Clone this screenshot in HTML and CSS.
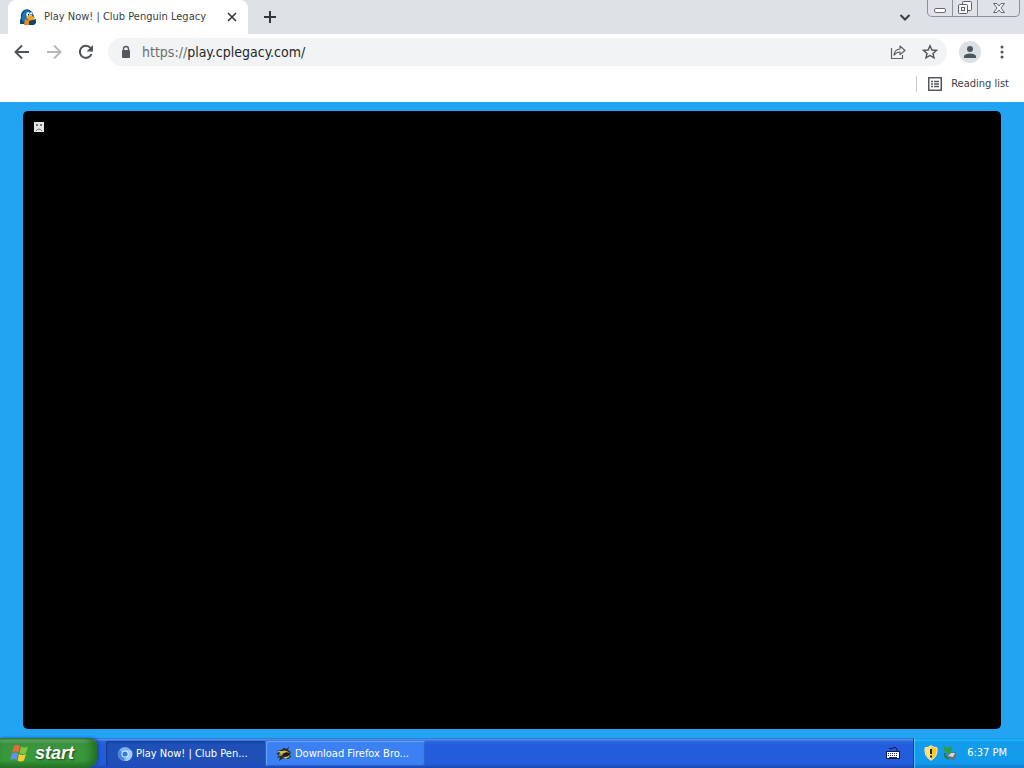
FILE: index.html
```html
<!DOCTYPE html>
<html lang="en">
<head>
<meta charset="utf-8">
<title>Play Now! | Club Penguin Legacy</title>
<link rel="stylesheet" href="styles.css">
</head>
<body>
<div class="desktop">
  <header class="tabstrip">
    <div class="tab">
      <svg class="tab-icon" width="16" height="16" viewBox="0 0 16 16" aria-hidden="true">
        <path d="M0 15V11L1 9Q0 4 4 1Q9-1 12 3L14 7L12 15Z" fill="#0b4c82"/>
        <path d="M2 8Q2 3 6 1.500Q10 1 11 5L9 9L6 12L4 13L2 11Z" fill="#1975b5"/>
        <ellipse cx="8" cy="5.500" rx="1.700" ry="2.500" fill="#fff"/>
        <ellipse cx="11" cy="5.500" rx="1.300" ry="2.300" fill="#fff"/>
        <path d="M8.500 5v1.500M11 5v1.500" stroke="#111"/>
        <path d="M6 8Q10 6 15 8Q14 12 9 12Z" fill="#f5a51c"/>
        <path d="M5 10L10 12L9 16H4Z" fill="#ee8824"/>
        <path d="M9 12L16 10V14L14 16H9Z" fill="#12446a"/>
      </svg>
      <span class="tab-title">Play Now! | Club Penguin Legacy</span>
      <button class="icon-btn tab-close" aria-label="Close tab"><svg width="16" height="16" viewBox="0 0 16 16"><path d="M4 4l8 8M12 4l-8 8" stroke="#33363a" stroke-width="1.600"/></svg></button>
    </div>
    <button class="icon-btn new-tab" aria-label="New tab"><svg width="16" height="16" viewBox="0 0 16 16"><path d="M8 2v12M2 8h12" stroke="#33363a" stroke-width="2"/></svg></button>
    <button class="icon-btn tab-search" aria-label="Search tabs"><svg width="16" height="16" viewBox="0 0 16 16"><path d="M3.500 6L8 10.500L12.500 6" fill="none" stroke="#3c4043" stroke-width="2"/></svg></button>
    <div class="window-controls">
      <button class="win-btn" aria-label="Minimize"><svg width="14" height="14" viewBox="0 0 14 14"><rect x="1.500" y="7.500" width="11" height="4" rx="1.500" fill="#fff" stroke="#666b72"/></svg></button>
      <button class="win-btn" aria-label="Restore"><svg width="14" height="14" viewBox="0 0 14 14"><g fill="#f5f6f8" stroke="#5d6269"><rect x="4.500" y=".5" width="9" height="9" rx="1"/><rect x=".5" y="3.500" width="9" height="9" rx="1"/><rect x="3.500" y="6.500" width="3" height="3"/></g></svg></button>
      <button class="win-btn win-close" aria-label="Close window"><svg width="14" height="14" viewBox="0 0 14 14"><path d="M1.500 2.500h3.500l2 2.500l2-2.500h3.500l-3.500 4.500l3.500 4.500h-3.500l-2-2.500l-2 2.500h-3.500l3.500-4.500z" fill="#f5f6f8" stroke="#666b72"/></svg></button>
    </div>
  </header>

  <nav class="toolbar">
    <button class="icon-btn" aria-label="Back"><svg width="16" height="16" viewBox="0 0 16 16"><path d="M15 8H2M8 1.500L1.500 8L8 14.500" fill="none" stroke="#505357" stroke-width="1.900"/></svg></button>
    <button class="icon-btn" aria-label="Forward"><svg width="16" height="16" viewBox="0 0 16 16"><path d="M1 8H14M8 1.500L14.500 8L8 14.500" fill="none" stroke="#b5b7ba" stroke-width="1.900"/></svg></button>
    <button class="icon-btn" aria-label="Reload"><svg width="16" height="16" viewBox="0 0 16 16"><path d="M13.500 10A6 6 0 1 1 12.500 4" fill="none" stroke="#505357" stroke-width="2"/><path d="M15 1v6.500H8.500z" fill="#505357"/></svg></button>
    <div class="address">
      <svg class="lock" width="12" height="14" viewBox="0 0 12 14" aria-hidden="true"><path d="M3.500 6V4a2.500 2.500 0 0 1 5 0V6" fill="none" stroke="#55595e" stroke-width="1.400"/><rect x="2" y="5" width="8" height="8" rx="1" fill="#55595e"/></svg>
      <label class="scheme" for="url">https://</label>
      <input class="url" id="url" type="text" value="play.cplegacy.com/" spellcheck="false">
      <button class="icon-btn" aria-label="Share"><svg width="16" height="16" viewBox="0 0 16 16" fill="none" stroke="#5f6368" stroke-width="1.200"><path d="M1.500 4v10.500h11V11"/><path d="M4 11Q4.500 5.500 10 5V2L15 6.500L10 10.500V8Q6.500 8 4 11Z" stroke-linejoin="round"/></svg></button>
      <button class="icon-btn" aria-label="Bookmark this page"><svg width="16" height="16" viewBox="0 0 16 16"><path d="M8 1.800L9.900 6l4.500.4L11 9.400l1 4.500L8 11.500L4 13.900l1-4.500L1.600 6.400L6.100 6Z" fill="none" stroke="#505357" stroke-width="1.400"/></svg></button>
    </div>
    <button class="avatar" aria-label="Profile"><svg width="14" height="14" viewBox="0 0 14 14" fill="#4d5760"><circle cx="7" cy="4" r="3"/><path d="M1 13V11Q2 8.500 7 8.500T13 11V13Z"/></svg></button>
    <button class="icon-btn" aria-label="Menu"><svg width="16" height="16" viewBox="0 0 16 16" fill="#505357"><circle cx="8" cy="3" r="1.500"/><circle cx="8" cy="8" r="1.500"/><circle cx="8" cy="13" r="1.500"/></svg></button>
  </nav>

  <div class="bookmarks">
    <button class="reading"><svg width="14" height="14" viewBox="0 0 14 14"><rect x=".75" y=".75" width="12.500" height="12.500" fill="none" stroke="#55595e" stroke-width="1.500"/><path d="M3 4.500h2M3 7h2M3 9.500h2M6 4.500h5M6 7h5M6 9.500h5" stroke="#55595e" stroke-width="1.300"/></svg>Reading list</button>
  </div>

  <main class="page">
    <div class="game">
      <svg width="12" height="12" viewBox="0 0 12 12" role="img" aria-label="Plugin could not be loaded"><rect x="1" y="1" width="10" height="10" fill="#e4e4e4"/><path d="M3 3l2 2M5 3L3 5M7 3l2 2M9 3L7 5M3 10Q6 6 9 10" stroke="#555" stroke-width=".8" fill="none"/></svg>
    </div>
  </main>

  <footer class="taskbar">
    <button class="start">
      <svg width="20" height="20" viewBox="0 0 20 20" aria-hidden="true"><path d="M4 3Q7 1 10 3L8.500 9.500Q5.500 7.500 2 9.500Z" fill="#e86a3c"/><path d="M11 3.500Q14 5.500 18 3.500L16 10Q13 12 9.500 10Z" fill="#80c643"/><path d="M2 10.500Q5 8.500 8 10.500L6.500 17Q3.500 15 0 17Z" fill="#5f91ee"/><path d="M9 11Q12 13 16 11L14 17.500Q11 19.500 7.500 17.500Z" fill="#f8cb33"/></svg>
      <span>start</span>
    </button>
    <div class="tasks">
      <button class="task task-active"><svg width="16" height="16" viewBox="0 0 16 16"><circle cx="8" cy="8" r="7" fill="#78b2f4"/><path d="M8 8L2 4A7 7 0 0 0 7 15Z" fill="#4a87df"/><path d="M8 4.500H14.500A7 7 0 0 1 8 15L11 9Z" fill="#a5cdfb"/><circle cx="8" cy="8" r="3.600" fill="#e4f0ff"/><circle cx="8" cy="8" r="2.600" fill="#327add"/></svg><span>Play Now! | Club Pen...</span></button>
      <button class="task"><svg width="16" height="16" viewBox="0 0 16 16"><path d="M1 4L5 4L8 2L11 3L13 0L12 4L15 6L14 8L15 11L12 13L9 12L6 13L3 15L4 11L1 12L3 9L0 8L3 6Z" fill="#292d22"/><path d="M3 7Q8 2 14 7L10 6L6 9Z" fill="#d8b652"/><path d="M6 11Q10 12 14 9L13 11L10 12.500Z" fill="#e4ca79"/><path d="M2 5l4 1M3 9h3" stroke="#d9c885"/><path d="M6 8Q10 6 14 8L11 10Z" fill="#171b14"/></svg><span>Download Firefox Bro...</span></button>
    </div>
    <button class="keyboard" aria-label="Input language"><svg width="14" height="14" viewBox="0 0 14 14"><path d="M3 2q2 2 4 0t4 1v2" fill="none" stroke="#101a42"/><rect x=".5" y="5.500" width="13" height="7" fill="#fff" stroke="#101a42"/><path d="M2 7.500h10M2 9.500h10" stroke="#26335d" stroke-dasharray="1 1"/><path d="M3 11.500h8" stroke="#26335d"/></svg></button>
    <div class="tray">
      <svg width="16" height="16" viewBox="0 0 16 16" role="img" aria-label="Security alert"><path d="M8 .7Q11 2.800 14 2.800Q15 11.500 8 15.300Q1 11.500 2 2.800Q5 2.800 8 .7Z" fill="#f6c928" stroke="#f9efb4"/><path d="M8 1.500Q5 3.700 3 3.500Q2.500 11 8 14.500Z" fill="#ffe77d"/><path d="M8 4v5M8 10.500v2" stroke="#292411" stroke-width="2"/></svg>
      <svg width="16" height="16" viewBox="0 0 16 16" role="img" aria-label="Safely remove hardware"><path d="M5 11L8 7L14 7V12L12 15L6 14Z" fill="#65717d"/><path d="M6 11L9 8L13 8L11 12Z" fill="#d3dadd"/><path d="M2 1L5 3L9 1L10 5L7 9L3 7L2 5Z" fill="#2d9c46"/><path d="M3 8L3 11L6 14" fill="none" stroke="#237d48" stroke-width="2"/></svg>
      <time class="clock">6:37 PM</time>
    </div>
  </footer>
</div>
</body>
</html>
```
FILE: styles.css
```css
* { box-sizing: border-box; }
body { margin: 0; font: 11px/16px Tahoma, "DejaVu Sans Condensed", "Open Sans", sans-serif; color: #3c4043; }
button { margin: 0; padding: 0; border: 0; background: none; font: inherit; color: inherit; }
svg { display: block; flex: none; }
.desktop { display: flex; flex-direction: column; height: 100vh; background: #fff; }
.icon-btn { display: flex; flex: none; align-items: center; justify-content: center; width: 32px; height: 28px; }

.tabstrip { display: flex; flex: none; height: 34px; padding-left: 8px; background: #dee1e6; }
.tab { display: flex; align-items: center; width: 240px; padding: 0 8px 0 12px; background: #fff; border-radius: 8px 8px 0 0; }
.tab-title { flex: 1; margin-left: 8px; white-space: nowrap; }
.tab-close { width: 16px; }
.new-tab { width: 28px; height: 34px; margin-left: 8px; }
.tab-search { height: 34px; margin-left: auto; }
.window-controls { display: flex; height: 17px; margin: 0 4px 0 6px; border: 1px solid #8d929a; border-top: 0; border-radius: 0 0 5px 5px; background: #dfe2e8; }
.win-btn { display: flex; align-items: center; justify-content: center; width: 25px; border-right: 1px solid #8d929a; }
.win-close { width: 41px; border-right: 0; }

.toolbar { display: flex; flex: none; align-items: center; height: 36px; padding: 0 6px; }
.address { display: flex; flex: 1; align-items: center; height: 28px; margin: 0 8px 0 6px; padding: 0 1px 0 12px; border-radius: 14px; background: #f1f3f4; font-size: 14px; line-height: 20px; }
.scheme { margin-left: 10px; color: #6b6f73; }
.url { flex: 1; min-width: 0; padding: 0; border: 0; outline: 0; background: none; font: inherit; color: #25282b; }
.avatar { display: flex; align-items: center; justify-content: center; width: 22px; height: 22px; margin: 0 5px 0 4px; border-radius: 50%; background: #dbe0e5; }

.bookmarks { display: flex; flex: none; align-items: center; justify-content: flex-end; height: 32px; padding: 0 15px 4px; }
.reading { display: flex; align-items: center; gap: 9px; padding-left: 11px; border-left: 1px solid #c4c7ca; }

.page { display: flex; flex: 1; min-height: 0; padding: 9px 23px; background: #22a4f3; }
.game { flex: 1; padding: 10px; border-radius: 5px; background: #000; }

.taskbar { display: flex; flex: none; height: 30px; color: #fff; background: linear-gradient(#3168d5, #4993e6 5%, #2b64dd 12%, #245ddb 25%, #245ddb 85%, #1b49b5); }
.start { display: flex; align-items: center; gap: 5px; width: 97px; padding: 0 0 0 10px; border-radius: 0 8px 10px 0; background: linear-gradient(#338237, #6bb46b 8%, #3c9440 20%, #379a37 75%, #287629); box-shadow: inset -5px 0 8px #226b27, 2px 0 3px #1b46a8; font: italic bold 18px/22px "Liberation Sans", Arial, sans-serif; text-shadow: 1px 1px 2px #1d4219; }
.tasks { display: flex; flex: 1; gap: 1px; min-width: 0; padding: 3px 0 2px 9px; }
.task { display: flex; align-items: center; gap: 3px; width: 159px; padding: 0 10px; border-radius: 2px; background: #3c81f3; box-shadow: inset 1px 1px 1px #6ba3fa, inset -1px -1px 1px #2860cc; white-space: nowrap; }
.task-active { padding-left: 11px; background: #1e50b8; box-shadow: inset 1px 1px 2px #15398e; }
.keyboard { display: flex; align-items: center; justify-content: center; width: 40px; }
.tray { display: flex; align-items: center; gap: 3px; padding: 0 17px 0 9px; border-left: 1px solid #104594; background: linear-gradient(#1685d8, #18b9fa 6%, #159bec 14%, #119aeb 85%, #0f77c7); box-shadow: inset 1px 0 1px #50c2fa; }
.clock { margin-left: 6px; }
```
